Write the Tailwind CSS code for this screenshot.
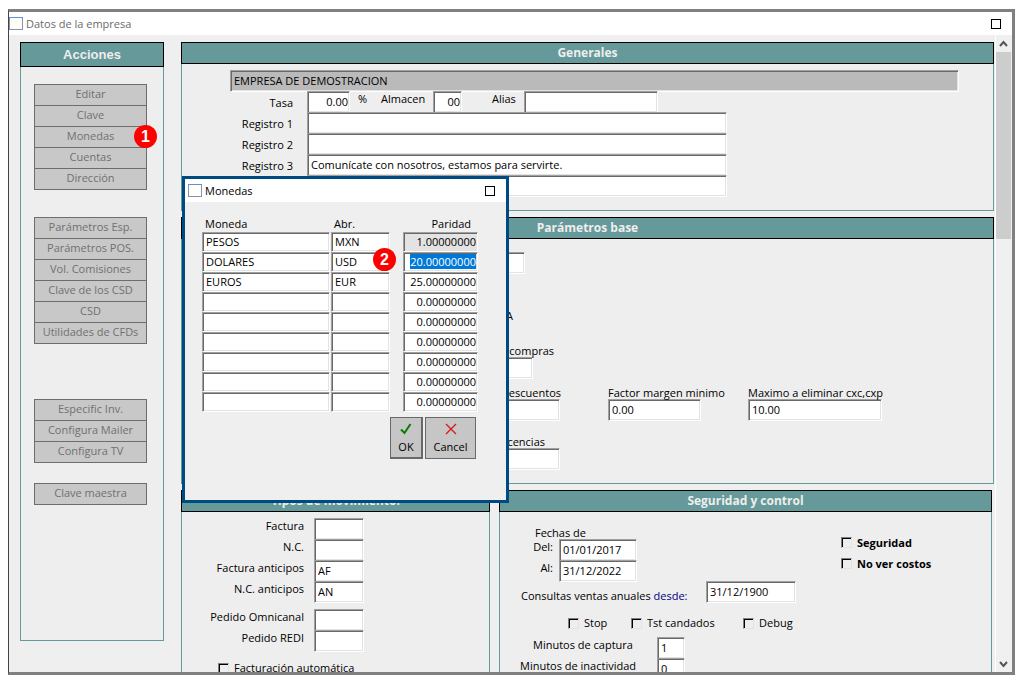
<!DOCTYPE html>
<html lang="es">
<head>
  <meta charset="utf-8" />
  <meta name="viewport" content="width=device-width, initial-scale=1" />
  <title>Datos de la empresa</title>
  <script src="https://cdn.jsdelivr.net/npm/@tailwindcss/browser@4"></script>
</head>
<!-- Sunken text boxes and tick boxes share their look from here -->
<body class="h-screen bg-white py-[9px] pl-2 pr-[7px] font-['Open_Sans','Noto_Sans',sans-serif] text-[11px] leading-4 text-black
  [&_[type=text]]:block [&_[type=text]]:h-[22px] [&_[type=text]]:min-w-0 [&_[type=text]]:border [&_[type=text]]:border-t-[#a0a0a0] [&_[type=text]]:border-l-[#a0a0a0] [&_[type=text]]:border-r-white [&_[type=text]]:border-b-white [&_[type=text]]:bg-white [&_[type=text]]:px-[3px] [&_[type=text]]:pb-[2px] [&_[type=text]]:outline-none [&_[type=text]]:shadow-[inset_1px_1px_0_#696969,inset_-1px_-1px_0_#e3e3e3]
  [&_[type=checkbox]]:size-[11px] [&_[type=checkbox]]:shrink-0 [&_[type=checkbox]]:appearance-none [&_[type=checkbox]]:border [&_[type=checkbox]]:border-t-[#808080] [&_[type=checkbox]]:border-l-[#808080] [&_[type=checkbox]]:border-r-[#e3e3e3] [&_[type=checkbox]]:border-b-[#e3e3e3] [&_[type=checkbox]]:shadow-[inset_1px_1px_0_#000]">

  <div class="relative flex h-full flex-col border-y-3 border-r-3 border-l border-[#808080] border-l-[#444] bg-[#efefef]">
    <!-- Title bar -->
    <header class="flex h-[23px] shrink-0 items-center bg-white pr-[11px]">
      <svg class="h-[13px] w-[14px]" viewBox="0 0 14 13"><rect x=".5" y=".5" width="13" height="12" fill="#fffff8" stroke="#8a8fb8"/><path d="M0 .5h14" stroke="#5b8fe0"/></svg>
      <h1 class="ml-[3px] text-[#6b6b6b]">Datos de la empresa</h1>
      <button type="button" aria-label="Maximizar" class="ml-auto size-[10px] border border-black"></button>
    </header>

    <div class="flex min-h-0 flex-1">
      <!-- Actions -->
      <aside class="mt-[7px] mb-[31px] ml-[11px] flex w-[144px] shrink-0 flex-col">
        <h2 class="h-[25px] border border-black bg-[#669999] text-center font-['Liberation_Sans',sans-serif] text-[13px] leading-[23px] font-bold text-[#eee]">Acciones</h2>
        <nav class="flex-1 border border-t-0 border-[#669999] bg-[#eee] px-[13px] pt-[17px] text-[#707070] [&_button]:block [&_button]:h-[21px] [&_button]:w-full [&_button]:bg-[#c8c8c8] [&_button]:pb-[2px] [&_button]:leading-4 [&_button]:whitespace-nowrap">
          <div class="relative w-[113px] divide-y divide-[#6d6d6d] border border-b-0 border-[#6d6d6d] [&_button]:border-b">
            <button type="button">Editar</button>
            <button type="button">Clave</button>
            <button type="button">Monedas</button>
            <button type="button">Cuentas</button>
            <button type="button" class="border-[#6d6d6d]">Dirección</button>
            <span class="absolute top-10 -right-[11px] size-[23px] rounded-full bg-[#fd0000] text-center font-['Liberation_Sans',sans-serif] text-base leading-[23px] font-bold text-white">1</span>
          </div>
          <div class="mt-[27px] w-[113px] divide-y divide-[#6d6d6d] border border-b-0 border-[#6d6d6d] [&_button]:border-b">
            <button type="button">Parámetros Esp.</button>
            <button type="button">Parámetros POS.</button>
            <button type="button">Vol. Comisiones</button>
            <button type="button">Clave de los CSD</button>
            <button type="button">CSD</button>
            <button type="button" class="border-[#6d6d6d]">Utilidades de CFDs</button>
          </div>
          <div class="mt-[55px] w-[113px] divide-y divide-[#6d6d6d] border border-b-0 border-[#6d6d6d] [&_button]:border-b">
            <button type="button">Especific Inv.</button>
            <button type="button">Configura Mailer</button>
            <button type="button" class="border-[#6d6d6d]">Configura TV</button>
          </div>
          <div class="mt-5 w-[113px] border border-b-0 border-[#6d6d6d] [&_button]:border-b">
            <button type="button" class="border-[#6d6d6d]">Clave maestra</button>
          </div>
        </nav>
      </aside>

      <main class="ml-[17px] min-w-0 flex-1 overflow-hidden pt-[7px] pr-px [&_h2]:h-[22px] [&_h2]:border [&_h2]:border-black [&_h2]:bg-[#669999] [&_h2]:text-center [&_h2]:text-xs [&_h2]:leading-5 [&_h2]:font-bold [&_h2]:text-[#eee]">
        <!-- Generales -->
        <section>
          <h2>Generales</h2>
          <div class="border border-t-0 border-[#669999] bg-[#eee] pt-[6px] pb-[13px]">
            <div class="mr-[34px] ml-12 flex h-[21px]">
              <input type="text" aria-label="Empresa" value="EMPRESA DE DEMOSTRACION" class="flex-1 bg-[#bababa]!" />
            </div>
            <div class="flex h-[21px] items-start">
              <label for="tasa" class="mr-[14px] w-[111px] pt-1 text-right">Tasa</label>
              <input id="tasa" type="text" value="0.00" class="w-[43px] pr-px! text-right" />
              <span class="ml-2 w-[23px]">%</span>
              <label for="almacen" class="w-[52px]">Almacen</label>
              <input id="almacen" type="text" value="00" class="w-[29px] pr-px! text-right" />
              <label for="alias" class="ml-[30px] w-8">Alias</label>
              <input id="alias" type="text" class="w-[134px]" />
            </div>
            <div class="flex h-[21px] items-start">
              <label for="reg1" class="mr-[14px] w-[111px] pt-1 text-right">Registro 1</label>
              <input id="reg1" type="text" class="w-[420px]" />
            </div>
            <div class="flex h-[21px] items-start">
              <label for="reg2" class="mr-[14px] w-[111px] pt-1 text-right">Registro 2</label>
              <input id="reg2" type="text" class="w-[420px]" />
            </div>
            <div class="flex h-[21px] items-start">
              <label for="reg3" class="mr-[14px] w-[111px] pt-1 text-right">Registro 3</label>
              <input id="reg3" type="text" value="Comunícate con nosotros, estamos para servirte." class="w-[420px]" />
            </div>
            <div class="flex h-[22px] items-start pl-[125px]">
              <input type="text" aria-label="Registro 4" class="w-[420px]" />
            </div>
          </div>
        </section>

        <!-- Parámetros base -->
        <section class="mt-[6px]">
          <h2>Parámetros base</h2>
          <div class="border border-t-0 border-[#669999] bg-[#eee] pt-[13px] pb-[13px] pl-[278px] [&_label]:block [&_label]:h-[14px] [&_label]:leading-4 [&_label]:whitespace-nowrap">
            <input type="text" aria-label="IVA" class="w-[65px]" />
            <label class="mt-[34px] w-[53px] text-right">IVA</label>
            <label for="compras" class="mt-[21px] w-[94px] text-right">compras</label>
            <input id="compras" type="text" class="w-[73px]" />
            <div class="mt-[6px] flex">
              <div class="w-[148px]">
                <label for="desc" class="w-[101px] text-right">descuentos</label>
                <input id="desc" type="text" class="w-[100px]" />
              </div>
              <div class="w-[140px]">
                <label for="factor">Factor margen minimo</label>
                <input id="factor" type="text" value="0.00" class="w-[93px]" />
              </div>
              <div>
                <label for="maximo">Maximo a eliminar cxc,cxp</label>
                <input id="maximo" type="text" value="10.00" class="w-[134px]" />
              </div>
            </div>
            <label for="lic" class="mt-[13px] w-[85px] text-right">licencias</label>
            <input id="lic" type="text" class="w-[100px]" />
          </div>
        </section>

        <div class="mt-[6px] mr-[2px] flex gap-[9px]">
          <!-- Tipos de movimiento -->
          <section class="flex w-[309px] shrink-0 flex-col">
            <h2>Tipos de movimiento.</h2>
            <div class="flex-1 border border-t-0 border-[#669999] bg-[#eee] pt-[6px] [&_label]:w-[122px] [&_label]:text-right [&_input]:w-[50px]">
              <div class="flex h-[21px] gap-[10px]"><label for="fac">Factura</label><input id="fac" type="text" /></div>
              <div class="flex h-[21px] gap-[10px]"><label for="nc">N.C.</label><input id="nc" type="text" /></div>
              <div class="flex h-[21px] gap-[10px]"><label for="facant">Factura anticipos</label><input id="facant" type="text" value="AF" /></div>
              <div class="flex h-[22px] gap-[10px]"><label for="ncant">N.C. anticipos</label><input id="ncant" type="text" value="AN" /></div>
              <div class="mt-[6px] flex h-[21px] gap-[10px]"><label for="omni">Pedido Omnicanal</label><input id="omni" type="text" /></div>
              <div class="flex h-[22px] gap-[10px]"><label for="redi">Pedido REDI</label><input id="redi" type="text" /></div>
              <div class="mt-2 ml-9 flex items-center gap-[5px]"><input id="auto" type="checkbox" class="w-[11px]!" /><label for="auto" class="w-auto!">Facturación automática</label></div>
            </div>
          </section>

          <!-- Seguridad y control -->
          <section class="flex min-w-0 flex-1 flex-col">
            <h2>Seguridad y control</h2>
            <div class="flex-1 border border-t-0 border-[#669999] bg-[#eee] pt-[13px]">
              <div class="flex">
                <div class="w-[341px]">
                  <p class="h-[14px] pl-[35px]">Fechas de</p>
                  <div class="flex h-[21px]"><label for="del" class="w-[59px] pr-[6px] text-right">Del:</label><input id="del" type="text" value="01/01/2017" class="w-[78px]" /></div>
                  <div class="flex h-[21px]"><label for="al" class="w-[59px] pr-[6px] text-right">Al:</label><input id="al" type="text" value="31/12/2022" class="w-[78px]" /></div>
                </div>
                <div class="pt-[10px] font-bold">
                  <label class="flex h-[21px] items-start gap-[5px]"><input type="checkbox" class="mt-[2px]" />Seguridad</label>
                  <label class="flex h-[21px] items-start gap-[5px]"><input type="checkbox" class="mt-[2px]" />No ver costos</label>
                </div>
              </div>
              <div class="flex h-[22px]">
                <label for="ventas" class="w-[206px] pt-[7px] pl-[21px] whitespace-nowrap">Consultas ventas anuales <span class="text-[#000080]">desde:</span></label>
                <input id="ventas" type="text" value="31/12/1900" class="w-[90px]" />
              </div>
              <div class="mt-3 flex h-[22px] items-start pl-[68px]">
                <label class="flex w-[63px] items-center gap-[5px]"><input type="checkbox" />Stop</label>
                <label class="flex w-28 items-center gap-[5px]"><input type="checkbox" />Tst candados</label>
                <label class="flex items-center gap-[5px]"><input type="checkbox" />Debug</label>
              </div>
              <div class="flex h-[21px]"><label for="cap" class="w-[157px] pl-[33px]">Minutos de captura</label><input id="cap" type="text" value="1" class="w-7" /></div>
              <div class="flex h-[21px]"><label for="inac" class="w-[157px] pl-5">Minutos de inactividad</label><input id="inac" type="text" value="0" class="w-7" /></div>
            </div>
          </section>
        </div>
      </main>

      <!-- Scrollbar -->
      <div class="flex w-[17px] shrink-0 flex-col border-l border-white bg-[#f0f0f0] pr-px">
        <svg class="h-[17px] w-[15px] shrink-0" viewBox="0 0 15 17"><path d="M4 11l3.500-4 3.500 4" fill="none" stroke="#555" stroke-width="2"/></svg>
        <div class="h-[187px] bg-[#cdcdcd]"></div>
        <svg class="mt-auto h-[17px] w-[15px] shrink-0" viewBox="0 0 15 17"><path d="M4 7l3.500 4 3.500-4" fill="none" stroke="#555" stroke-width="2"/></svg>
      </div>
    </div>

    <!-- Monedas dialog -->
    <div role="dialog" aria-labelledby="dlg-title" class="absolute top-[164px] left-[173px] h-[327px] w-[327px] border-3 border-[#004a82] bg-[#efefef]">
      <div class="flex h-[23px] items-center bg-white pr-[11px] pl-[3px]">
        <svg class="h-[13px] w-[14px]" viewBox="0 0 14 13"><rect x=".5" y=".5" width="13" height="12" fill="#fffff8" stroke="#8a8fb8"/><path d="M0 .5h14" stroke="#5b8fe0"/></svg>
        <h2 id="dlg-title" class="ml-[3px]">Monedas</h2>
        <button type="button" aria-label="Maximizar" class="ml-auto size-[10px] border border-black"></button>
      </div>
      <table class="mt-[14px] ml-[17px] w-[276px] table-fixed border-collapse [&_td]:h-5 [&_td]:p-0 [&_th]:h-4 [&_th]:p-0 [&_th]:font-normal [&_td_input]:h-5!">
        <colgroup><col class="w-[129px]" /><col class="w-[72px]" /><col class="w-[75px]" /></colgroup>
        <thead>
          <tr><th class="pl-[3px]! text-left">Moneda</th><th class="pl-[3px]! text-left">Abr.</th><th class="pr-[7px]! text-right">Paridad</th></tr>
        </thead>
        <tbody>
          <tr><td><input type="text" aria-label="Moneda 1" value="PESOS" class="w-32" /></td><td><input type="text" aria-label="Abr. 1" value="MXN" class="w-[59px]" /></td><td><input type="text" aria-label="Paridad 1" value="1.00000000" class="w-[75px] bg-[#e3e3e3]! pr-px! text-right" /></td></tr>
          <tr><td><input type="text" aria-label="Moneda 2" value="DOLARES" class="w-32" /></td><td class="relative"><input type="text" aria-label="Abr. 2" value="USD" class="w-[59px]" /><span class="absolute -top-1 left-[42px] size-[23px] rounded-full bg-[#fd0000] text-center font-['Liberation_Sans',sans-serif] text-base leading-[23px] font-bold text-white">2</span></td><td><input id="paridad2" type="text" aria-label="Paridad 2" value="20.00000000" class="w-[75px] pr-px! text-right selection:bg-[#0078d7] selection:text-white" /></td></tr>
          <tr><td><input type="text" aria-label="Moneda 3" value="EUROS" class="w-32" /></td><td><input type="text" aria-label="Abr. 3" value="EUR" class="w-[59px]" /></td><td><input type="text" aria-label="Paridad 3" value="25.00000000" class="w-[75px] pr-px! text-right" /></td></tr>
          <tr><td><input type="text" aria-label="Moneda 4" class="w-32" /></td><td><input type="text" aria-label="Abr. 4" class="w-[59px]" /></td><td><input type="text" aria-label="Paridad 4" value="0.00000000" class="w-[75px] pr-px! text-right" /></td></tr>
          <tr><td><input type="text" aria-label="Moneda 5" class="w-32" /></td><td><input type="text" aria-label="Abr. 5" class="w-[59px]" /></td><td><input type="text" aria-label="Paridad 5" value="0.00000000" class="w-[75px] pr-px! text-right" /></td></tr>
          <tr><td><input type="text" aria-label="Moneda 6" class="w-32" /></td><td><input type="text" aria-label="Abr. 6" class="w-[59px]" /></td><td><input type="text" aria-label="Paridad 6" value="0.00000000" class="w-[75px] pr-px! text-right" /></td></tr>
          <tr><td><input type="text" aria-label="Moneda 7" class="w-32" /></td><td><input type="text" aria-label="Abr. 7" class="w-[59px]" /></td><td><input type="text" aria-label="Paridad 7" value="0.00000000" class="w-[75px] pr-px! text-right" /></td></tr>
          <tr><td><input type="text" aria-label="Moneda 8" class="w-32" /></td><td><input type="text" aria-label="Abr. 8" class="w-[59px]" /></td><td><input type="text" aria-label="Paridad 8" value="0.00000000" class="w-[75px] pr-px! text-right" /></td></tr>
          <tr><td><input type="text" aria-label="Moneda 9" class="w-32" /></td><td><input type="text" aria-label="Abr. 9" class="w-[59px]" /></td><td><input type="text" aria-label="Paridad 9" value="0.00000000" class="w-[75px] pr-px! text-right" /></td></tr>
        </tbody>
      </table>
      <div class="mt-[5px] flex justify-end gap-[2px] pr-[30px]">
        <button type="button" class="flex h-[42px] w-[33px] flex-col items-center border border-r-2 border-b-2 border-[#696969] bg-[#c6c6c6] pt-1">
          <svg class="mb-[3px] h-[14px] w-3" viewBox="0 0 12 14"><path d="M1 7.500l3.500 3.500L10.500 2" fill="none" stroke="#008000" stroke-width="2"/></svg>
          OK
        </button>
        <button type="button" class="flex h-[42px] w-[51px] flex-col items-center border border-[#696969] bg-[#c6c6c6] pt-1">
          <svg class="mb-[3px] h-[14px] w-3" viewBox="0 0 12 14"><path d="M1 2l10 10M11 2L1 12" fill="none" stroke="#d81818" stroke-width="1.300"/></svg>
          Cancel
        </button>
      </div>
    </div>
  </div>

  <script>
    document.getElementById("paridad2").select();
  </script>
</body>
</html>
